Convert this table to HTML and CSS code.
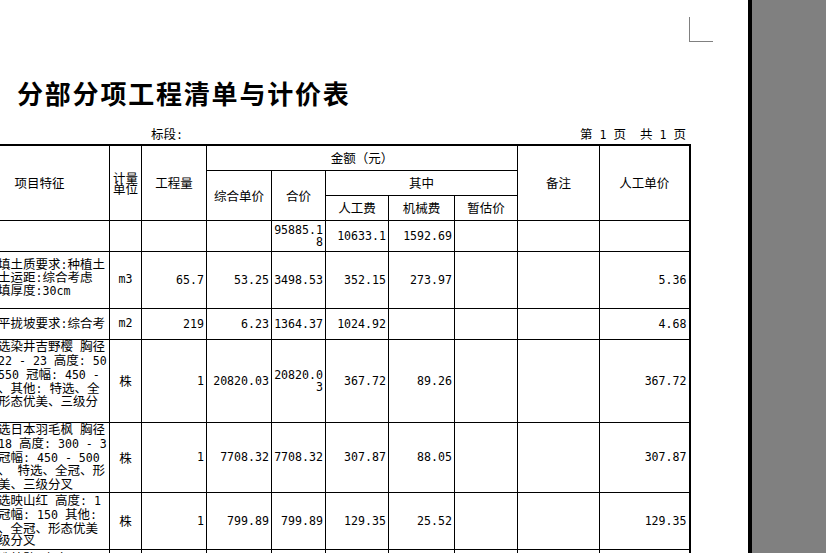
FILE: index.html
```html
<!DOCTYPE html>
<html lang="zh-CN">
<head>
<meta charset="utf-8">
<title>分部分项工程清单与计价表</title>
<link rel="stylesheet" href="styles.css">
</head>
<body>
<div class="page">
  <div class="crop"></div>
  <h1 class="title">分部分项工程清单与计价表</h1>
  <div class="info">
    <span class="seg">标段<span class="m">:</span></span>
    <span class="pg">第<span class="m"> 1 </span>页<span class="m">  </span>共<span class="m"> 1 </span>页</span>
  </div>
  <div class="sheet">
    <table>
      <colgroup>
        <col class="c1"><col class="c2"><col class="c3"><col class="c4"><col class="c5">
        <col class="c6"><col class="c7"><col class="c8"><col class="c9"><col class="c10">
      </colgroup>
      <thead>
        <tr class="r25">
          <th rowspan="3">项目特征</th>
          <th rowspan="3" class="unit-h">计量<br>单位</th>
          <th rowspan="3">工程量</th>
          <th colspan="5">金额（元）</th>
          <th rowspan="3">备注</th>
          <th rowspan="3" class="last">人工单价</th>
        </tr>
        <tr class="r25">
          <th rowspan="2">综合单价</th>
          <th rowspan="2">合价</th>
          <th colspan="3">其中</th>
        </tr>
        <tr class="r25">
          <th>人工费</th>
          <th>机械费</th>
          <th>暂估价</th>
        </tr>
      </thead>
      <tbody>
        <tr class="r31">
          <td class="d"></td>
          <td class="u"></td>
          <td class="n"></td>
          <td class="n"></td>
          <td class="n">95885.1<br>8</td>
          <td class="n">10633.1</td>
          <td class="n">1592.69</td>
          <td class="n"></td>
          <td></td>
          <td class="n last"></td>
        </tr>
        <tr class="r57">
          <td class="d d2">
            <div>填土质要求<span class="m">:</span>种植土</div>
            <div>土运距<span class="m">:</span>综合考虑</div>
            <div>填厚度<span class="m">:30cm</span></div>
          </td>
          <td class="u m">m3</td>
          <td class="n">65.7</td>
          <td class="n">53.25</td>
          <td class="n">3498.53</td>
          <td class="n">352.15</td>
          <td class="n">273.97</td>
          <td class="n"></td>
          <td></td>
          <td class="n last">5.36</td>
        </tr>
        <tr class="r31">
          <td class="d"><div>平拢坡要求<span class="m">:</span>综合考</div></td>
          <td class="u m">m2</td>
          <td class="n">219</td>
          <td class="n">6.23</td>
          <td class="n">1364.37</td>
          <td class="n">1024.92</td>
          <td class="n"></td>
          <td class="n"></td>
          <td></td>
          <td class="n last">4.68</td>
        </tr>
        <tr class="r83">
          <td class="d d4">
            <div>选染井吉野樱<span class="m"> </span>胸径</div>
            <div><span class="m">22 - 23 </span>高度<span class="m">: 50</span></div>
            <div><span class="m">550 </span>冠幅<span class="m">: 450 -</span></div>
            <div>、其他<span class="m">: </span>特选、全</div>
            <div>形态优美、三级分</div>
            <div>&nbsp;</div>
          </td>
          <td class="u">株</td>
          <td class="n">1</td>
          <td class="n">20820.03</td>
          <td class="n">20820.0<br>3</td>
          <td class="n">367.72</td>
          <td class="n">89.26</td>
          <td class="n"></td>
          <td></td>
          <td class="n last">367.72</td>
        </tr>
        <tr class="r70">
          <td class="d d4">
            <div>选日本羽毛枫<span class="m"> </span>胸径</div>
            <div><span class="m">18 </span>高度<span class="m">: 300 - 3</span></div>
            <div>冠幅<span class="m">: 450 - 500</span></div>
            <div>、<span class="m"> </span>特选、全冠、形</div>
            <div>美、三级分叉</div>
          </td>
          <td class="u">株</td>
          <td class="n">1</td>
          <td class="n">7708.32</td>
          <td class="n">7708.32</td>
          <td class="n">307.87</td>
          <td class="n">88.05</td>
          <td class="n"></td>
          <td></td>
          <td class="n last">307.87</td>
        </tr>
        <tr class="r57">
          <td class="d d4">
            <div>选映山红<span class="m"> </span>高度<span class="m">: 1</span></div>
            <div>冠幅<span class="m">: 150 </span>其他<span class="m">:</span></div>
            <div>、全冠、形态优美</div>
            <div>级分叉</div>
          </td>
          <td class="u">株</td>
          <td class="n">1</td>
          <td class="n">799.89</td>
          <td class="n">799.89</td>
          <td class="n">129.35</td>
          <td class="n">25.52</td>
          <td class="n"></td>
          <td></td>
          <td class="n last">129.35</td>
        </tr>
        <tr class="r57 top">
          <td class="d d4">
            <div>选杜鹃<span class="m"> </span>高度<span class="m">: 60</span></div>
            <div>冠幅<span class="m">: 50 </span>其他<span class="m">:</span></div>
          </td>
          <td class="u"></td>
          <td class="n"></td>
          <td class="n"></td>
          <td class="n"></td>
          <td class="n"></td>
          <td class="n"></td>
          <td class="n"></td>
          <td></td>
          <td class="n last"></td>
        </tr>
      </tbody>
    </table>
  </div>
</div>
</body>
</html>
```

FILE: styles.css
```css
html, body {
  margin: 0;
  padding: 0;
  height: 100%;
  overflow: hidden;
}

body {
  display: flex;
  background: #808080;
  font-family: "Noto Sans CJK SC", sans-serif;
  color: #000;
}

.page {
  flex: none;
  width: 748px;
  height: 100%;
  background: #fff;
  border-right: 4px solid #000;
  overflow: hidden;
  padding-top: 17px;
  box-sizing: content-box;
}

.crop {
  margin-left: 689px;
  width: 23px;
  height: 24px;
  border-left: 1px solid #808080;
  border-bottom: 1px solid #808080;
}

.title {
  margin: 36px 0 0 17px;
  font-size: 26px;
  line-height: 30px;
  font-weight: bold;
  letter-spacing: 1.8px;
  white-space: nowrap;
}

.info {
  display: flex;
  margin-top: 19px;
  height: 14px;
  font-size: 12.5px;
  line-height: 14px;
  white-space: nowrap;
}

.info .seg {
  margin-left: 151px;
}

.info .pg {
  margin-left: auto;
  margin-right: 62px;
  white-space: pre;
}

.m {
  font-family: "DejaVu Sans Mono", monospace;
  font-size: 11.6px;
  white-space: pre;
}

.sheet {
  margin-top: 3px;
  margin-left: -31px;
}

table {
  border-collapse: collapse;
  table-layout: fixed;
  width: 720px;
}

.c1 { width: 140px; }
.c2 { width: 32px; }
.c3 { width: 65px; }
.c4 { width: 65px; }
.c5 { width: 54px; }
.c6 { width: 63px; }
.c7 { width: 66px; }
.c8 { width: 63px; }
.c9 { width: 82px; }
.c10 { width: 90px; }

th, td {
  border: 1px solid #000;
  padding: 0 2px;
  font-size: 12.5px;
  font-weight: normal;
  line-height: 13px;
  vertical-align: middle;
  text-align: center;
  overflow: hidden;
}

thead tr:first-child th {
  border-top: 2px solid #000;
}

.last {
  border-right: 2px solid #000;
}

.unit-h {
  line-height: 11px;
  padding: 0;
}

.r25 { height: 25px; }
.r31 { height: 31px; }
.r57 { height: 57px; }
.r70 { height: 70px; }
.r83 { height: 83px; }

.d {
  text-align: left;
  white-space: nowrap;
  padding-left: 28px;
  padding-right: 0;
}

.d2 div {
  line-height: 11px;
}

.d2 {
  padding-bottom: 4px;
}

.d4 div {
  line-height: 12.75px;
}

.top td {
  vertical-align: top;
  padding-top: 2px;
}

.n {
  text-align: right;
  font-family: "DejaVu Sans Mono", monospace;
  font-size: 11.6px;
  line-height: 12px;
  padding-right: 2px;
}

.u {
  text-align: center;
}

.u.m {
  font-size: 11.6px;
}
```
